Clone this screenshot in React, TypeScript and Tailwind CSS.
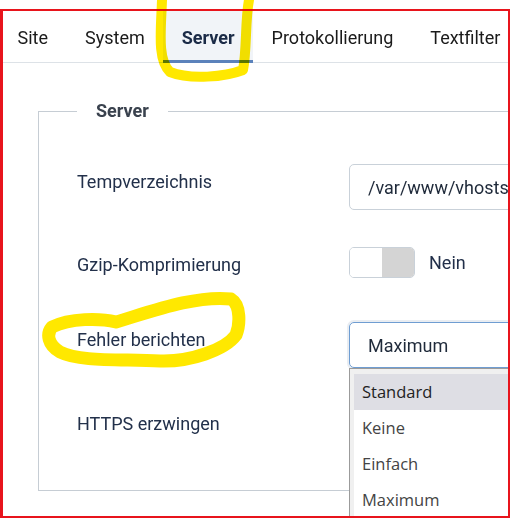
import React from "react";

const tabs = ["Site", "System", "Server", "Protokollierung", "Textfilter"];

export default function App() {
  return (
    <div className="relative w-[511px] h-[519px] bg-white overflow-hidden" style={{ fontFamily: "Roboto, 'Liberation Sans', sans-serif" }}>
      <div className="mt-[9px] w-[510px] h-[509px] border-2 border-l-[3px] border-[#e8141c] overflow-hidden">
        {/* Tabs */}
        <div className="flex h-[52px] border-b border-[#dde2e7] ml-[-4px]">
          {tabs.map((t) => (
            <div
              key={t}
              className={
                t === "Server"
                  ? "relative px-[18.5px] flex items-center bg-[#f1f4f8] text-[18px] font-bold text-[#1b2b47] whitespace-nowrap"
                  : "px-[18.5px] flex items-center text-[18px] text-[#1a1a1a] whitespace-nowrap"
              }
            >
              <span className="mt-[1px]">{t}</span>
              {t === "Server" && <div className="absolute left-0 right-0 bottom-[-1px] h-[3px] bg-[#5b82bb]" />}
            </div>
          ))}
        </div>

        {/* Fieldset Server */}
        <fieldset className="ml-[35px] mt-[36px] w-[600px] border border-[#c6cdd4] pl-[38px] pt-[41px] pb-[54px]">
          <legend className="px-[19px] text-[18px] leading-[24px] font-bold text-[#3a424e]">Server</legend>

          <div className="flex items-start">
            <div className="w-[272px] mt-[6px] leading-[24px] text-[18px] text-[#22304a]">Tempverzeichnis</div>
            <div className="h-[46px] w-[220px] border border-[#c9d1d9] rounded-[5px] flex items-center pl-[18px] text-[18px] text-[#1f2a3a] whitespace-nowrap overflow-hidden">
              /var/www/vhosts
            </div>
          </div>

          <div className="flex items-start mt-[37px]">
            <div className="w-[272px] mt-[6px] leading-[24px] text-[18px] text-[#22304a]">Gzip-Komprimierung</div>
            <div className="flex items-center">
              <div className="h-[31px] w-[66px] border border-[#c9d1d9] rounded-[5px] flex overflow-hidden">
                <div className="w-[32px] bg-white" />
                <div className="flex-1 bg-[#d4d4d4]" />
              </div>
              <span className="ml-[14px] text-[18px] text-[#22304a]">Nein</span>
            </div>
          </div>

          <div className="flex items-start mt-[44px]">
            <div className="w-[272px] mt-[6px] leading-[24px] text-[18px] text-[#22304a]">Fehler berichten</div>
            <div className="relative">
              <div className="h-[46px] w-[220px] border border-[#6f9dd2] rounded-l-[5px] flex items-center pl-[18px] text-[18px] text-[#1f2a3a] shadow-[0_0_0_2px_#e9edf2]">
                Maximum
              </div>
              <div
                className="absolute left-0 top-[46px] w-[220px] border border-[#9b9b9b] bg-[#f0f0f0] pt-[5px] pl-[4px] z-10"
                style={{ fontFamily: "'Open Sans', 'Noto Sans', sans-serif" }}
              >
                <div className="h-[36px] flex items-center pl-[8px] bg-[#dedee4] text-[16.5px] text-[#222]">Standard</div>
                <div className="h-[36px] flex items-center pl-[8px] bg-white text-[16.5px] text-[#444]">Keine</div>
                <div className="h-[36px] flex items-center pl-[8px] bg-white text-[16.5px] text-[#444]">Einfach</div>
                <div className="h-[36px] flex items-center pl-[8px] bg-white text-[16.5px] text-[#444]">Maximum</div>
              </div>
            </div>
          </div>

          <div className="flex items-start mt-[38px]">
            <div className="w-[272px] mt-[6px] leading-[24px] text-[18px] text-[#22304a]">HTTPS erzwingen</div>
          </div>
        </fieldset>

        <fieldset className="ml-[35px] mt-[29px] w-[600px] border border-[#c6cdd4] pl-[38px] pt-[40px] pb-[40px]">
          <legend className="px-[19px] text-[18px] leading-[24px] font-bold text-[#3a424e]">Zeitzone</legend>
        </fieldset>
      </div>

      <svg className="absolute inset-0 pointer-events-none mix-blend-multiply" width="511" height="519" viewBox="0 0 511 519">
        <path
          d="M 162 0 C 161 30, 157 60, 170 72 C 190 80, 225 77, 243 70 C 247 50, 245 20, 249 0"
          fill="none"
          stroke="#ffe800"
          strokeWidth="10"
          strokeLinecap="round"
          strokeLinejoin="round"
        />
        <path
          d="M 52 327 C 70 318, 100 318, 116 322 C 150 312, 195 295, 231 299 C 241 305, 240 325, 236 335 C 225 350, 190 362, 160 361 C 120 359, 80 362, 60 352 C 48 345, 46 334, 52 327 Z"
          fill="none"
          stroke="#ffe800"
          strokeWidth="13"
          strokeLinecap="round"
          strokeLinejoin="round"
        />
      </svg>
    </div>
  );
}
